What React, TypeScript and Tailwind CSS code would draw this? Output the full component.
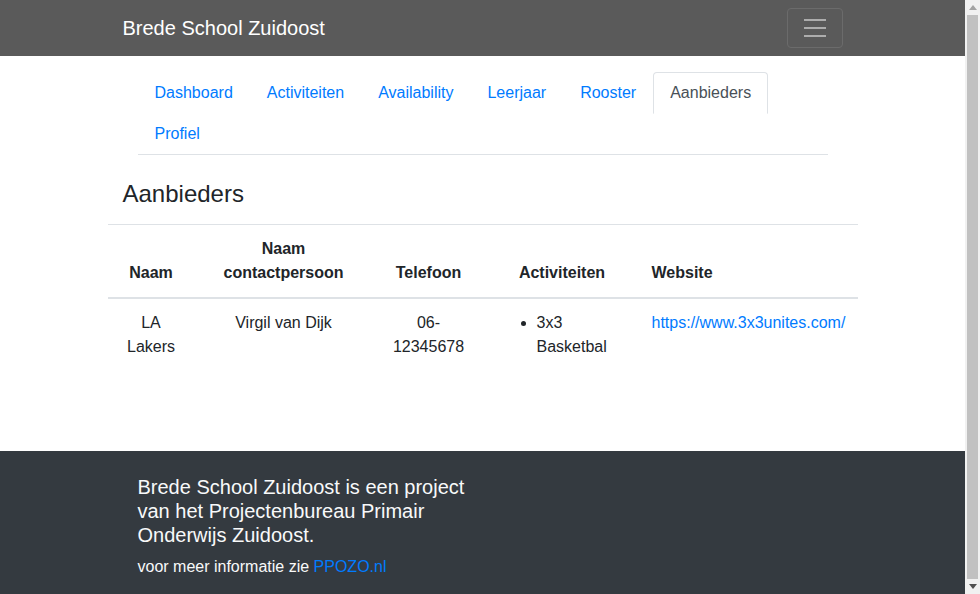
import React from 'react';

const tabs = ['Dashboard', 'Activiteiten', 'Availability', 'Leerjaar', 'Rooster', 'Aanbieders', 'Profiel'];

function Scrollbar() {
    // classic browser scrollbar as seen in the screenshot
    return (
        <div className="w-[15px] h-screen bg-[#f1f1f1] flex flex-col shrink-0">
            <div className="h-[15px] flex items-center justify-center">
                <svg width="8" height="5" viewBox="0 0 8 5"><path d="M4 0L8 5H0z" fill="#a3a3a3" /></svg>
            </div>
            <div className="flex-1 mx-[2px] bg-[#c1c1c1]" />
            <div className="h-[15px] flex items-center justify-center">
                <svg width="8" height="5" viewBox="0 0 8 5"><path d="M0 0H8L4 5z" fill="#505050" /></svg>
            </div>
        </div>
    );
}

export default function App() {
    const active = 'Aanbieders';

    return (
        <div className="h-screen flex overflow-hidden bg-white text-[#212529] text-base leading-6 font-['Liberation_Sans',Arial,sans-serif]">
            <div className="flex-1 min-w-0 overflow-hidden">
                {/* NAVBAR */}
                <nav className="bg-[#5a5a5a] h-14">
                    <div className="w-[720px] mx-auto h-full flex items-center justify-between">
                        <a href="#" className="text-white text-xl leading-[30px]">Brede School Zuidoost</a>
                        <button className="w-14 h-10 flex items-center justify-center border border-[#6b6b6b] rounded">
                            <svg width="30" height="30" viewBox="0 0 30 30">
                                <path d="M4 7h22M4 15h22M4 23h22" stroke="#adadad" strokeWidth="2" />
                            </svg>
                        </button>
                    </div>
                </nav>

                {/* TABS */}
                <div className="w-[720px] mx-auto px-[15px] mt-4">
                    <ul className="flex flex-wrap border-b border-[#dee2e6]">
                        {tabs.map((t) => (
                            <li key={t} className="-mb-px">
                                <a
                                    href="#"
                                    className={`block px-4 py-2 border rounded-t ${t === active ? 'border-[#dee2e6] border-b-white bg-white text-[#495057]' : 'border-transparent text-[#007bff]'}`}
                                >
                                    {t}
                                </a>
                            </li>
                        ))}
                    </ul>
                </div>

                {/* CONTENT */}
                <main className="w-[750px] mx-auto pb-12">
                    <h4 className="pl-[15px] mt-6 mb-4 text-2xl leading-[29px]">Aanbieders</h4>
                    <table className="w-full table-fixed border-collapse mb-4">
                        <colgroup>
                            <col className="w-[87px]" />
                            <col className="w-[178px]" />
                            <col className="w-[112px]" />
                            <col className="w-[155px]" />
                            <col className="w-[218px]" />
                        </colgroup>
                        <thead>
                            <tr className="border-t border-[#dee2e6] border-b-2">
                                <th className="p-3 align-bottom text-center font-bold">Naam</th>
                                <th className="p-3 align-bottom text-center font-bold">Naam contactpersoon</th>
                                <th className="p-3 align-bottom text-center font-bold">Telefoon</th>
                                <th className="p-3 align-bottom text-center font-bold">Activiteiten</th>
                                <th className="p-3 align-bottom text-left font-bold">Website</th>
                            </tr>
                        </thead>
                        <tbody>
                            <tr>
                                <td className="p-3 align-top text-center">LA Lakers</td>
                                <td className="p-3 align-top text-center">Virgil van Dijk</td>
                                <td className="p-3 align-top text-center break-words">06-12345678</td>
                                <td className="p-3 align-top">
                                    <ul className="list-disc pl-10 mb-4">
                                        <li>3x3 Basketbal</li>
                                    </ul>
                                </td>
                                <td className="p-3 align-top">
                                    <a href="#" className="text-[#007bff]">https://www.3x3unites.com/</a>
                                </td>
                            </tr>
                        </tbody>
                    </table>
                </main>

                {/* FOOTER */}
                <footer className="bg-[#343a40] text-[#f8f9fa] pt-6 pb-1">
                    <div className="w-[720px] mx-auto px-[15px]">
                        <div className="w-[330px]">
                            <h5 className="text-xl leading-6 mb-2">Brede School Zuidoost is een project van het Projectenbureau Primair Onderwijs Zuidoost.</h5>
                            <p className="mb-4">
                                voor meer informatie zie <a href="#" className="text-[#007bff]">PPOZO.nl</a>
                            </p>
                        </div>
                    </div>
                </footer>
            </div>
            <Scrollbar />
        </div>
    );
}
